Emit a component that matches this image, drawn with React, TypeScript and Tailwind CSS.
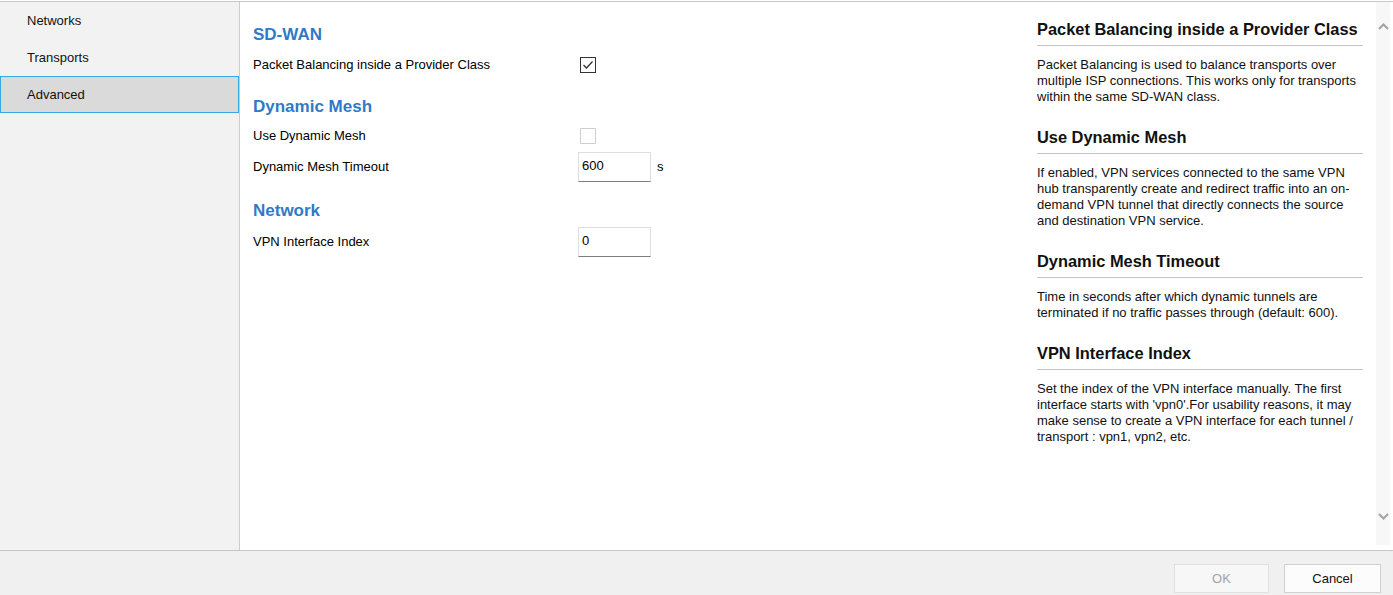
import React from "react";

const Heading = ({ children, className = "" }: { children: React.ReactNode; className?: string }) => (
  <div className={`h-[22px] leading-[22px] text-[17px] font-bold text-[#2f7ac8] ${className}`}>{children}</div>
);

const Check = ({ checked }: { checked: boolean }) => (
  <div
    className={`ml-[2px] w-[16px] h-[16px] bg-white border ${checked ? "border-[#333333]" : "border-[#cfcfcf]"} flex items-center justify-center`}
  >
    {checked && (
      <svg width="14" height="14" viewBox="0 0 14 14">
        <polyline points="2.5,7 5.5,10 11.5,3.5" fill="none" stroke="#333333" strokeWidth="1.3" />
      </svg>
    )}
  </div>
);

const Field = ({ value }: { value: string }) => (
  <div className="w-[73px] h-[30px] bg-white border border-[#dedede] border-b-[#7d7d7d] px-[3px] pt-[5px] leading-[16px] text-[13px] text-black">
    {value}
  </div>
);

const HelpSection = ({ title, lines, className = "" }: { title: string; lines: string[]; className?: string }) => (
  <div className={className}>
    <div className="h-[20px] leading-[20px] text-[16.4px] font-bold text-[#111111] whitespace-nowrap">{title}</div>
    <div className="mt-[6px] h-px bg-[#c4c4c4]" />
    <div className="mt-[11px] text-[13px] leading-[16px] text-[#111111]">
      {lines.map((l, i) => (
        <div key={i} className="whitespace-nowrap">
          {l}
        </div>
      ))}
    </div>
  </div>
);

export default function App() {
  return (
    <div className="w-[1393px] h-[595px] flex flex-col bg-white font-['Liberation_Sans',Arial,sans-serif] text-[13px] text-black overflow-hidden">
      <div className="h-px bg-white" />
      <div className="h-px bg-[#c8c8c8]" />
      <div className="flex flex-1 min-h-0">
        {/* Sidebar */}
        <div className="w-[240px] bg-[#f2f2f2] border-r border-[#cccccc] flex flex-col">
          <div className="h-[37px] flex items-center pl-[27px] text-[#111111]">Networks</div>
          <div className="h-[37px] flex items-center pl-[27px] text-[#111111]">Transports</div>
          <div className="h-[37px] w-[239px] flex items-center pl-[26px] bg-[#dadada] border border-[#3aa6e4] text-[#111111]">
            Advanced
          </div>
        </div>

        {/* Form */}
        <div className="w-[797px] pl-[13px] pt-[22px] flex flex-col">
          <Heading>SD-WAN</Heading>
          <div className="mt-[7px] h-[24px] flex items-center">
            <div className="w-[325px]">Packet Balancing inside a Provider Class</div>
            <Check checked />
          </div>

          <Heading className="mt-[19px]">Dynamic Mesh</Heading>
          <div className="mt-[6px] h-[24px] flex items-center">
            <div className="w-[325px]">Use Dynamic Mesh</div>
            <Check checked={false} />
          </div>
          <div className="mt-[4px] h-[30px] flex items-center">
            <div className="w-[325px]">Dynamic Mesh Timeout</div>
            <Field value="600" />
            <div className="ml-[6px]">s</div>
          </div>

          <Heading className="mt-[18px]">Network</Heading>
          <div className="mt-[5px] h-[30px] flex items-center">
            <div className="w-[325px]">VPN Interface Index</div>
            <Field value="0" />
          </div>
        </div>

        {/* Help panel */}
        <div className="w-[326px] pt-[17px] flex flex-col">
          <HelpSection
            title="Packet Balancing inside a Provider Class"
            lines={[
              "Packet Balancing is used to balance transports over",
              "multiple ISP connections. This works only for transports",
              "within the same SD-WAN class.",
            ]}
          />
          <HelpSection
            className="mt-[22px]"
            title="Use Dynamic Mesh"
            lines={[
              "If enabled, VPN services connected to the same VPN",
              "hub transparently create and redirect traffic into an on-",
              "demand VPN tunnel that directly connects the source",
              "and destination VPN service.",
            ]}
          />
          <HelpSection
            className="mt-[22px]"
            title="Dynamic Mesh Timeout"
            lines={[
              "Time in seconds after which dynamic tunnels are",
              "terminated if no traffic passes through (default: 600).",
            ]}
          />
          <HelpSection
            className="mt-[22px]"
            title="VPN Interface Index"
            lines={[
              "Set the index of the VPN interface manually. The first",
              "interface starts with 'vpn0'.For usability reasons, it may",
              "make sense to create a VPN interface for each tunnel /",
              "transport : vpn1, vpn2, etc.",
            ]}
          />
        </div>

        <div className="w-[13px]" />
        {/* Scrollbar */}
        <div className="w-[14px] mb-[5px] bg-[#f7f7f7] flex flex-col items-center justify-between pt-[21px] pb-[25px]">
          <svg width="11" height="7" viewBox="0 0 11 7" className="block shrink-0">
            <path d="M1 6 L5.5 1.5 L10 6" fill="none" stroke="#a3a3a3" strokeWidth="2" />
          </svg>
          <svg width="11" height="7" viewBox="0 0 11 7" className="block shrink-0">
            <path d="M1 1 L5.5 5.5 L10 1" fill="none" stroke="#a3a3a3" strokeWidth="2" />
          </svg>
        </div>
        <div className="w-[3px]" />
      </div>

      {/* Bottom bar */}
      <div className="h-[45px] border-t border-[#c6c6c6] bg-[#f0f0f0] flex justify-end items-start pt-[13px] pr-[12px] gap-[15px]">
        <div className="w-[95px] h-[29px] bg-[#f7f7f7] border border-[#e0e0e0] flex items-center justify-center text-[13px] text-[#a3a3a3]">
          OK
        </div>
        <div className="w-[97px] h-[29px] bg-[#fcfcfc] border border-[#d0d0d0] flex items-center justify-center text-[13px] text-[#111111]">
          Cancel
        </div>
      </div>
    </div>
  );
}
